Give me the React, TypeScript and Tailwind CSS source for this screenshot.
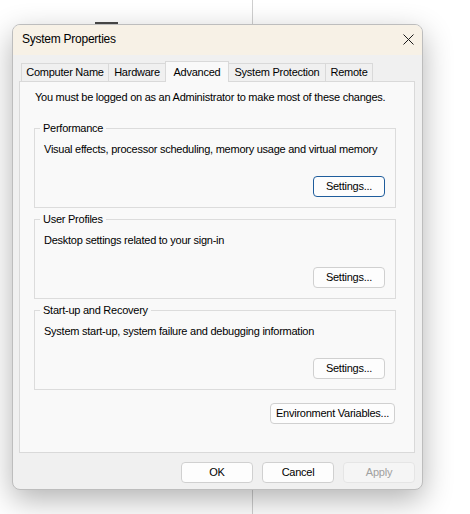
import React from "react";

const tabs = [
  { label: "Computer Name", w: "w-[88px]" },
  { label: "Hardware", w: "w-[58px]" },
  { label: "Advanced", w: "w-[64px]", active: true },
  { label: "System Protection", w: "w-[98px]" },
  { label: "Remote", w: "w-[48px]" },
];

function Button({
  children,
  className = "",
  focused = false,
  disabled = false,
}: {
  children: React.ReactNode;
  className?: string;
  focused?: boolean;
  disabled?: boolean;
}) {
  return (
    <button
      className={`flex h-[21px] items-center justify-center whitespace-nowrap rounded-[4px] border leading-none ${
        disabled
          ? "border-[#e5e5e5] bg-[#f5f5f5] text-[#a0a0a0]"
          : focused
          ? "border-[#1f5d9c] bg-[#fdfdfd] text-black"
          : "border-[#d0d0d0] bg-[#fdfdfd] text-black"
      } ${className}`}
    >
      {children}
    </button>
  );
}

function Group({
  title,
  text,
  focused = false,
  className = "",
}: {
  title: string;
  text: string;
  focused?: boolean;
  className?: string;
}) {
  return (
    <fieldset className={`ml-[14px] mr-[18px] border border-[#dcdcdc] ${className}`}>
      <legend className="ml-[5px] px-[3px] leading-[16px]">{title}</legend>
      <div className="flex flex-col pb-[10px] pl-[9px] pt-[5px]">
        <p className="whitespace-nowrap leading-[16px]">{text}</p>
        <Button focused={focused} className="mr-[10px] mt-[19px] w-[72px] self-end">
          Settings...
        </Button>
      </div>
    </fieldset>
  );
}

export default function App() {
  return (
    <div className="relative h-[514px] w-[470px] overflow-hidden bg-white font-['Liberation_Sans',Arial,sans-serif] text-[11px] tracking-[-0.25px] text-black">
      {/* desktop behind the dialog */}
      <div className="absolute left-[252px] top-0 h-full w-px bg-[#cfcfcf]" />
      <div className="absolute left-[95px] top-[22px] h-[2px] w-[23px] bg-[#4a4a4a]" />

      {/* dialog */}
      <div className="relative ml-[12px] mt-[24px] flex h-[466px] w-[411px] flex-col overflow-hidden rounded-[8px] border border-[#bdbdbd] bg-[#f0f0f0] shadow-[0_10px_30px_rgba(0,0,0,0.3)]">
        <div className="flex h-[30px] items-center justify-between bg-[#f7f1e6] pb-[2px] pl-[9px] pr-[9px]">
          <span className="text-[12px]">System Properties</span>
          <svg width="11" height="11" viewBox="0 0 11 11" className="mr-[-1px]">
            <path d="M0.5 0.5 L10.5 10.5 M10.5 0.5 L0.5 10.5" stroke="#1a1a1a" strokeWidth="1" />
          </svg>
        </div>

        <div className="flex flex-col pl-[6px] pr-[7px] pt-[6px]">
          {/* tabs */}
          <div className="flex h-[20px] items-end pl-[2px]">
            {tabs.map((t, i) =>
              t.active ? (
                <div
                  key={t.label}
                  className={`relative z-10 -mb-px flex h-[21px] ${t.w} -ml-px items-start justify-center whitespace-nowrap border-x border-t border-[#d9d9d9] bg-[#f9f9f9] pt-[2px]`}
                >
                  {t.label}
                </div>
              ) : (
                <div
                  key={t.label}
                  className={`flex h-[18px] ${t.w} ${i > 0 ? "-ml-px" : ""} items-center justify-center whitespace-nowrap border-x border-t border-[#d9d9d9] bg-[#f0f0f0]`}
                >
                  {t.label}
                </div>
              )
            )}
          </div>

          {/* panel */}
          <div className="flex h-[372px] flex-col border border-[#d9d9d9] bg-[#f9f9f9]">
            <p className="whitespace-nowrap pl-[15px] pt-[7px] leading-[16px]">
              You must be logged on as an Administrator to make most of these changes.
            </p>
            <Group
              className="mt-[15px]"
              title="Performance"
              text="Visual effects, processor scheduling, memory usage and virtual memory"
              focused
            />
            <Group
              className="mt-[3px]"
              title="User Profiles"
              text="Desktop settings related to your sign-in"
            />
            <Group
              className="mt-[3px]"
              title="Start-up and Recovery"
              text="System start-up, system failure and debugging information"
            />
            <Button className="mr-[19px] mt-[13px] w-[125px] self-end">Environment Variables...</Button>
          </div>

          {/* bottom buttons */}
          <div className="mt-[9px] flex justify-end gap-[9px]">
            <Button className="w-[72px]">OK</Button>
            <Button className="w-[72px]">Cancel</Button>
            <Button className="w-[72px]" disabled>
              Apply
            </Button>
          </div>
        </div>
      </div>
    </div>
  );
}
